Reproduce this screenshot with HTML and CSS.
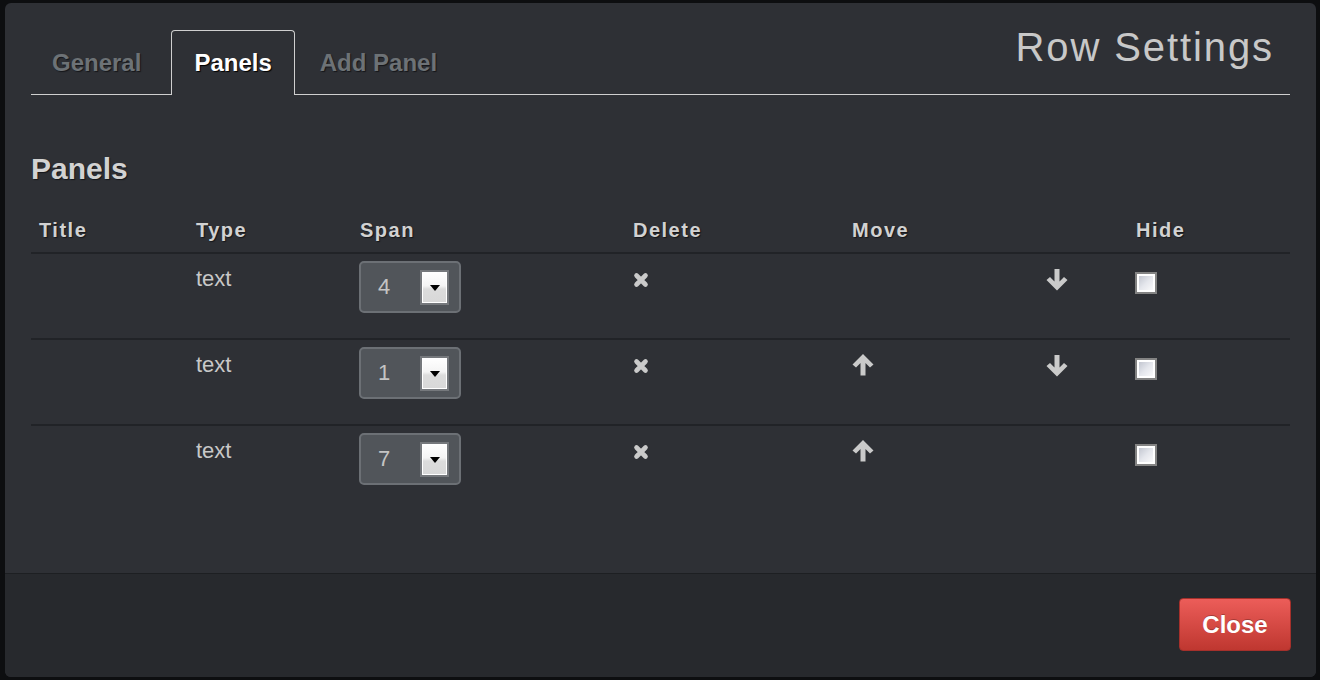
FILE: index.html
```html
<!DOCTYPE html>
<html>
<head>
<meta charset="utf-8">
<title>Row Settings</title>
<link rel="stylesheet" href="styles.css">
</head>
<body>
<div class="page">
  <div class="modal">
    <div class="modal-header">
      <ul class="tabs">
        <li class="tab">General</li>
        <li class="tab active">Panels</li>
        <li class="tab">Add Panel</li>
      </ul>
      <h2 class="modal-title">Row Settings</h2>
    </div>
    <div class="modal-body">
      <h3 class="section-title">Panels</h3>
      <div class="table">
        <div class="row head">
          <div class="cell">Title</div>
          <div class="cell">Type</div>
          <div class="cell">Span</div>
          <div class="cell">Delete</div>
          <div class="cell">Move</div>
          <div class="cell"></div>
          <div class="cell">Hide</div>
        </div>

        <div class="row">
          <div class="cell"></div>
          <div class="cell txt">text</div>
          <div class="cell"><div class="select"><span class="val">4</span><span class="arrow-box"><span class="tri"></span></span></div></div>
          <div class="cell"><svg class="ico-del" viewBox="0 0 16 16"><path d="M3.5 3.5L12.5 12.5M12.5 3.5L3.5 12.5"/></svg></div>
          <div class="cell"></div>
          <div class="cell"><svg class="ico-down" viewBox="0 0 22 22"><path d="M8.5 0H13.5V12.5L18 8L21.5 11L11 21.5L0.5 11L4 8L8.5 12.5Z"/></svg></div>
          <div class="cell"><span class="checkbox"></span></div>
        </div>

        <div class="row">
          <div class="cell"></div>
          <div class="cell txt">text</div>
          <div class="cell"><div class="select"><span class="val">1</span><span class="arrow-box"><span class="tri"></span></span></div></div>
          <div class="cell"><svg class="ico-del" viewBox="0 0 16 16"><path d="M3.5 3.5L12.5 12.5M12.5 3.5L3.5 12.5"/></svg></div>
          <div class="cell"><svg class="ico-up" viewBox="0 0 22 22"><path d="M8.5 21.5H13.5V9L18 13.5L21.5 10.5L11 0L0.5 10.5L4 13.5L8.5 9Z"/></svg></div>
          <div class="cell"><svg class="ico-down" viewBox="0 0 22 22"><path d="M8.5 0H13.5V12.5L18 8L21.5 11L11 21.5L0.5 11L4 8L8.5 12.5Z"/></svg></div>
          <div class="cell"><span class="checkbox"></span></div>
        </div>

        <div class="row last">
          <div class="cell"></div>
          <div class="cell txt">text</div>
          <div class="cell"><div class="select"><span class="val">7</span><span class="arrow-box"><span class="tri"></span></span></div></div>
          <div class="cell"><svg class="ico-del" viewBox="0 0 16 16"><path d="M3.5 3.5L12.5 12.5M12.5 3.5L3.5 12.5"/></svg></div>
          <div class="cell"><svg class="ico-up" viewBox="0 0 22 22"><path d="M8.5 21.5H13.5V9L18 13.5L21.5 10.5L11 0L0.5 10.5L4 13.5L8.5 9Z"/></svg></div>
          <div class="cell"></div>
          <div class="cell"><span class="checkbox"></span></div>
        </div>
      </div>
    </div>
    <div class="modal-footer">
      <button class="btn-close">Close</button>
    </div>
  </div>
</div>
</body>
</html>
```

FILE: styles.css
```css
html, body {
  margin: 0;
  padding: 0;
  background: #0d0e10;
  font-family: "Liberation Sans", Arial, sans-serif;
}

.page {
  padding: 3px 4px 3px 5px;
  width: 1320px;
  height: 680px;
  box-sizing: border-box;
}

.modal {
  width: 1311px;
  height: 674px;
  background: #2e3035;
  border-radius: 6px;
  overflow: hidden;
  display: flex;
  flex-direction: column;
}

/* header with tabs */
.modal-header {
  margin: 27px 26px 0;
  display: flex;
  align-items: flex-start;
  border-bottom: 1px solid #cfcfcf;
  height: 64px;
}

.tabs {
  list-style: none;
  margin: 0 0 0 -2px;
  padding: 0;
  display: flex;
}

.tab {
  font-size: 24px;
  font-weight: bold;
  line-height: 24px;
  color: #6d7276;
  text-shadow: 1px 1px 1px #15161a;
  padding: 20px 22px 20px;
  border: 1px solid transparent;
  border-bottom: 0;
  border-radius: 4px 4px 0 0;
  margin-right: 2px;
  white-space: nowrap;
}

.tab:first-child {
  padding-right: 25px;
  margin-right: 4px;
}

.tab.active {
  color: #ffffff;
  background: #2e3035;
  border-color: #cfcfcf;
  text-shadow: 1px 1px 1px #000;
}

.modal-title {
  margin: -3px 16px 0 auto;
  font-size: 40px;
  line-height: 40px;
  font-weight: normal;
  color: #c8c8c8;
  letter-spacing: 1.9px;
  white-space: nowrap;
}

/* body */
.modal-body {
  flex: 1;
  padding: 0 26px;
}

.section-title {
  margin: 59px 0 0;
  font-size: 30px;
  line-height: 30px;
  font-weight: bold;
  color: #d2d2d2;
  text-shadow: 1px 1px 1px #15161a;
}

.row {
  display: grid;
  grid-template-columns: 157px 164px 273px 219px 194px 90px 1fr;
  height: 84px;
  border-bottom: 2px solid #212327;
  align-items: start;
}

.row.last {
  border-bottom: 0;
}

.row.head {
  height: 70px;
  box-sizing: border-box;
  padding-top: 36px;
}

.cell {
  padding-left: 8px;
}

.head .cell {
  font-size: 20px;
  line-height: 20px;
  font-weight: bold;
  color: #d2d2d2;
  letter-spacing: 1.5px;
  text-shadow: 1px 1px 1px #15161a;
}

.txt {
  padding-top: 14px;
  font-size: 22px;
  line-height: 22px;
  color: #c8c8c8;
}

/* select */
.select {
  margin: 7px 0 0 -1px;
  width: 102px;
  height: 52px;
  box-sizing: border-box;
  background: #51555a;
  border: 2px solid #6c7075;
  border-radius: 5px;
  display: flex;
  align-items: center;
  justify-content: space-between;
  padding: 0 10px 0 17px;
}

.val {
  font-size: 22px;
  color: #c4c4c4;
  font-weight: 300;
}

.arrow-box {
  width: 29px;
  height: 35px;
  box-sizing: border-box;
  border: 2px solid #75787c;
  background: linear-gradient(#ffffff 0%, #f4f4f4 45%, #dcdcdc 55%, #d8d8d8 100%);
  box-shadow: inset 0 0 0 1px #ffffff;
  display: flex;
  align-items: center;
  justify-content: center;
}

.tri {
  width: 0;
  height: 0;
  border-left: 5px solid transparent;
  border-right: 5px solid transparent;
  border-top: 6px solid #000;
  margin-top: 1px;
}

/* icons */
.ico-del {
  display: block;
  margin-top: 18px;
  width: 16px;
  height: 16px;
}

.ico-del path {
  fill: none;
  stroke: #cacaca;
  stroke-width: 4.6;
  stroke-linecap: round;
}

.ico-up {
  display: block;
  margin-top: 14px;
  width: 22px;
  height: 22px;
  fill: #cacaca;
}

.ico-down {
  display: block;
  margin-top: 15px;
  width: 22px;
  height: 22px;
  fill: #cacaca;
}

.checkbox {
  display: block;
  margin: 18px 0 0 -1px;
  width: 22px;
  height: 22px;
  box-sizing: border-box;
  border: 2px solid #838383;
  background: linear-gradient(135deg, #b9bdc8 0%, #e4e6ec 50%, #ffffff 100%);
  box-shadow: inset 0 0 0 2px #ffffff;
}

/* footer */
.modal-footer {
  background: #27292d;
  border-top: 1px solid #1d1f22;
  padding: 24px 25px 26px;
  display: flex;
  justify-content: flex-end;
}

.btn-close {
  width: 112px;
  height: 53px;
  border: 1px solid #a5302b;
  border-radius: 4px;
  background: linear-gradient(#ec5d59, #bf3730);
  color: #ffffff;
  font-family: "Liberation Sans", Arial, sans-serif;
  font-size: 24px;
  font-weight: bold;
  text-shadow: 0 -1px 0 rgba(0, 0, 0, 0.25);
  padding: 0;
  cursor: pointer;
}
```
